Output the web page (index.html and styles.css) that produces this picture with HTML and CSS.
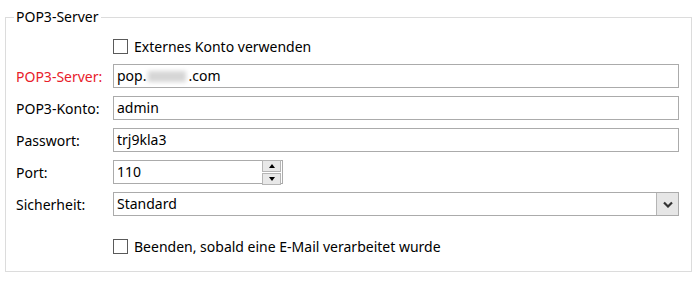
FILE: index.html
```html
<!DOCTYPE html>
<html lang="de">
<head>
    <meta charset="UTF-8">
    <title>POP3-Server</title>
    <link rel="stylesheet" href="styles.css">
</head>
<body>
    <fieldset class="group">
        <legend>POP3-Server</legend>
        <div class="check-row first">
            <span class="checkbox"></span>
            <span>Externes Konto verwenden</span>
        </div>
        <div class="form-row">
            <label class="required">POP3-Server:</label>
            <div class="field">pop.<span class="blur"></span>.com</div>
        </div>
        <div class="form-row">
            <label>POP3-Konto:</label>
            <div class="field">admin</div>
        </div>
        <div class="form-row">
            <label>Passwort:</label>
            <div class="field">trj9kla3</div>
        </div>
        <div class="form-row">
            <label>Port:</label>
            <div class="field port">
                <span class="value">110</span>
                <span class="spinner">
                    <span class="spin up"></span>
                    <span class="spin down"></span>
                </span>
            </div>
        </div>
        <div class="form-row">
            <label>Sicherheit:</label>
            <div class="field select">
                <span class="value">Standard</span>
                <span class="drop">
                    <svg width="10" height="7" viewBox="0 0 10 7"><path d="M1 1.5 L5 5.5 L9 1.5" fill="none" stroke="#333" stroke-width="2.2"/></svg>
                </span>
            </div>
        </div>
        <div class="check-row last">
            <span class="checkbox"></span>
            <span>Beenden, sobald eine E-Mail verarbeitet wurde</span>
        </div>
    </fieldset>
</body>
</html>
```

FILE: styles.css
```css
body {
    margin: 0;
    background: #fff;
    font-family: "Noto Sans", "Open Sans", sans-serif;
    font-size: 14px;
    color: #000;
}
.group {
    margin: 9px 2px 0 5px;
    padding: 0 12px 18px 10px;
    border: 1px solid #dcdcdc;
    height: 263px;
    box-sizing: border-box;
}
.group legend {
    padding: 0 2px;
    margin-left: -2px;
    line-height: 16px;
    font-size: 14px;
}
.check-row {
    display: flex;
    align-items: center;
    gap: 6px;
    margin-left: 97px;
    height: 16px;
}
.check-row.first {
    margin-top: 13px;
    margin-bottom: 10px;
}
.check-row.last {
    margin-top: 22px;
}
.checkbox {
    width: 13px;
    height: 13px;
    border: 1px solid #5a5a5a;
    background: #fff;
}
.form-row {
    display: flex;
    align-items: center;
    height: 24px;
    margin-bottom: 8px;
}
.form-row label {
    width: 97px;
    flex: none;
}
.required {
    color: #e8202a;
}
.field {
    flex: 1;
    height: 24px;
    box-sizing: border-box;
    border: 1px solid #ababab;
    padding: 0 3px;
    line-height: 22px;
    display: flex;
    align-items: center;
}
.blur {
    display: inline-block;
    width: 38px;
    height: 11px;
    margin: 0 2px;
    background: #d6d6d6;
    filter: blur(2px);
}
.port {
    flex: none;
    width: 170px;
    padding-right: 1px;
}
.value {
    flex: 1;
}
.spinner {
    display: flex;
    flex-direction: column;
    gap: 1px;
    width: 19px;
}
.spin {
    height: 10px;
    border: 1px solid #b5b5b5;
    background: #e8e8e8;
    display: flex;
    align-items: center;
    justify-content: center;
}
.spin::after {
    content: "";
    border-left: 3px solid transparent;
    border-right: 3px solid transparent;
}
.spin.up::after {
    border-bottom: 4px solid #000;
}
.spin.down::after {
    border-top: 4px solid #000;
}
.select {
    padding-right: 0;
}
.drop {
    width: 21px;
    height: 22px;
    border-left: 1px solid #b5b5b5;
    background: #e6e6e6;
    display: flex;
    align-items: center;
    justify-content: center;
}
```
